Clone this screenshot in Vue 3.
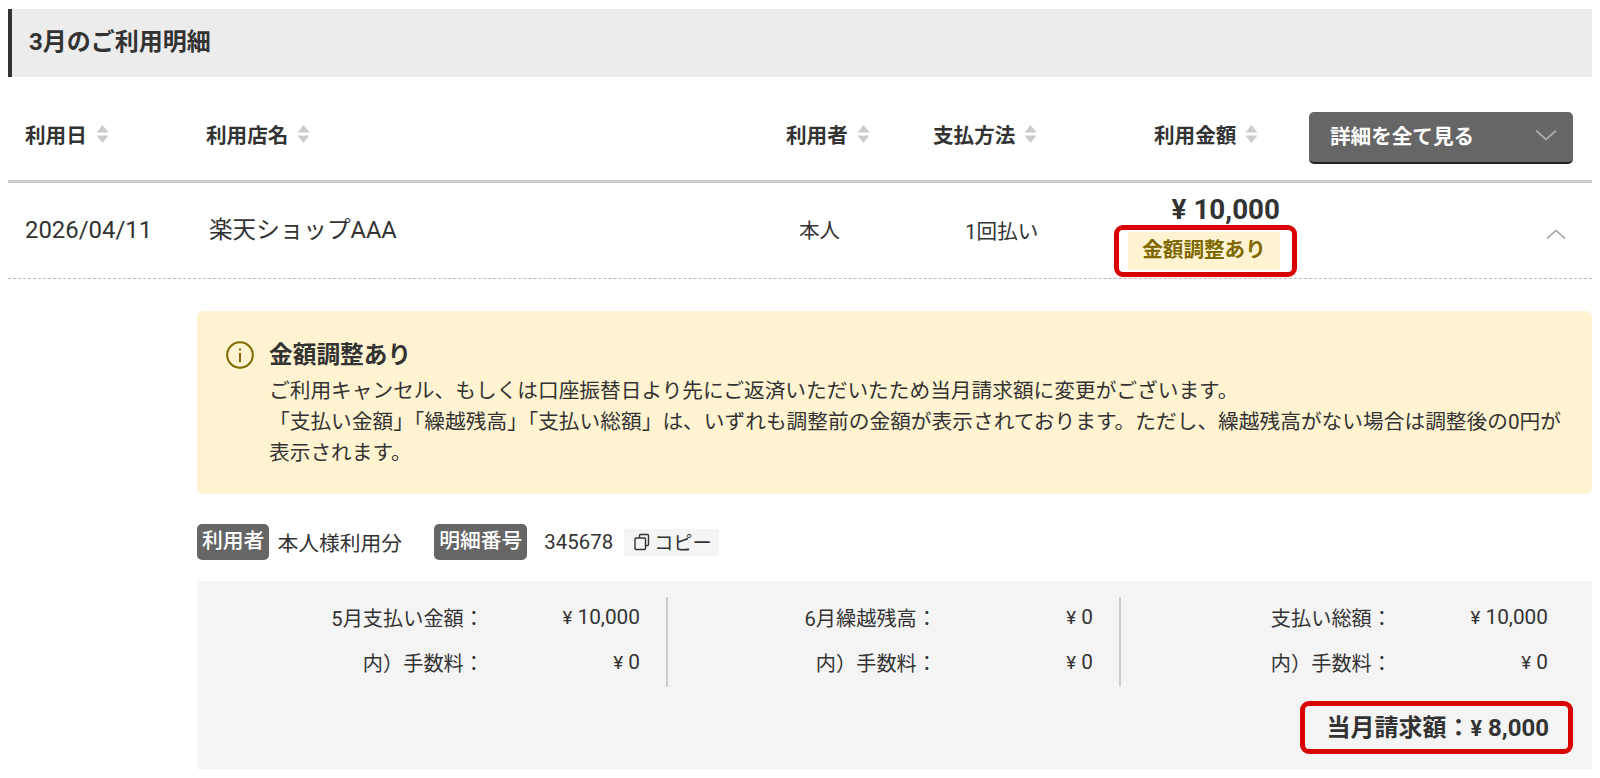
<template>
  <div class="statement">
    <h2 class="title">3月のご利用明細</h2>

    <div class="table-head">
      <div v-for="col in columns" :key="col.label" class="th" :class="col.cls">
        {{ col.label }}
        <svg class="sort" viewBox="0 0 13 20" width="13" height="20">
          <path d="M6.5 1 12.5 8.5H.5Z" />
          <path d="M.5 11.5h12L6.5 19Z" />
        </svg>
      </div>
      <button class="all-btn" type="button">
        <span>詳細を全て見る</span>
        <svg viewBox="0 0 22 12" width="22" height="12">
          <path d="M1 1.5 11 10.5 21 1.5" />
        </svg>
      </button>
    </div>

    <div class="table-row">
      <div class="cell-date">2026/04/11</div>
      <div class="cell-shop">楽天ショップAAA</div>
      <div class="cell-user">本人</div>
      <div class="cell-pay">1回払い</div>
      <div class="cell-amount">
        <div class="amount">¥ 10,000</div>
        <div class="mark-box">
          <span class="tag">金額調整あり</span>
        </div>
      </div>
      <div class="cell-toggle">
        <svg viewBox="0 0 22 12" width="20" height="11">
          <path d="M1 10.5 11 1.5 21 10.5" />
        </svg>
      </div>
    </div>

    <div class="detail">
      <div class="notice">
        <svg class="info" viewBox="0 0 28 28" width="28" height="28">
          <circle cx="14" cy="14" r="12.8" />
          <path d="M14 12v9" />
          <path d="M14 7.4v2.2" />
        </svg>
        <div>
          <div class="notice-title">金額調整あり</div>
          <p>ご利用キャンセル、もしくは口座振替日より先にご返済いただいたため当月請求額に変更がございます。</p>
          <p>「支払い金額」「繰越残高」「支払い総額」は、いずれも調整前の金額が表示されております。ただし、繰越残高がない場合は調整後の0円が表示されます。</p>
        </div>
      </div>

      <div class="meta">
        <span class="chip">利用者</span>
        <span class="meta-user">本人様利用分</span>
        <span class="chip chip-no">明細番号</span>
        <span class="meta-no">345678</span>
        <span class="copy">
          <svg viewBox="0 0 18 18" width="18" height="18">
            <path d="M6.5 4.5V2.5a1 1 0 0 1 1-1h7a1 1 0 0 1 1 1v9a1 1 0 0 1-1 1h-2" />
            <rect x="2" y="5" width="10.5" height="11.5" rx="1" />
          </svg>
          コピー
        </span>
      </div>

      <div class="summary">
        <div class="summary-cols">
          <div v-for="col in summary" :key="col.label" class="summary-col">
            <div class="line">
              <span>{{ col.label }}：</span>
              <span class="val"><i>¥</i> {{ col.value }}</span>
            </div>
            <div class="line">
              <span>内）手数料：</span>
              <span class="val"><i>¥</i> 0</span>
            </div>
          </div>
        </div>
        <div class="total-wrap">
          <div class="total">当月請求額：<i>¥</i> 8,000</div>
        </div>
      </div>
    </div>
  </div>
</template>

<script setup>
const columns = [
  { label: '利用日', cls: 'th-date' },
  { label: '利用店名', cls: 'th-shop' },
  { label: '利用者', cls: 'th-user' },
  { label: '支払方法', cls: 'th-pay' },
  { label: '利用金額', cls: 'th-amount' },
]

const summary = [
  { label: '5月支払い金額', value: '10,000' },
  { label: '6月繰越残高', value: '0' },
  { label: '支払い総額', value: '10,000' },
]
</script>

<style>
html, body {
  background: #fff;
}
</style>

<style scoped>
.statement {
  width: 1600px;
  height: 778px;
  overflow: hidden;
  box-sizing: border-box;
  padding: 9px 8px 0;
  font-family: Roboto, "Noto Sans CJK JP", sans-serif;
  color: #333;
}
.title {
  margin: 0;
  height: 68px;
  line-height: 66px;
  padding-left: 17px;
  background: #ececec;
  border-left: 4px solid #333;
  font-size: 24px;
  font-weight: 700;
}
.table-head {
  display: flex;
  align-items: center;
  box-sizing: border-box;
  height: 106px;
  padding-top: 10px;
  border-bottom: 3px solid #ccc;
}
.th {
  display: flex;
  align-items: center;
  gap: 9px;
  box-sizing: border-box;
  font-size: 20.6px;
  font-weight: 700;
}
.sort {
  fill: #ccc;
}
.th-date { width: 180px; padding-left: 17px; }
.th-shop { width: 578px; padding-left: 18px; }
.th-user { width: 147px; padding-left: 20px; }
.th-pay { width: 218px; padding-left: 20px; }
.th-amount { width: 178px; padding-left: 23px; }
.all-btn {
  display: flex;
  align-items: center;
  justify-content: space-between;
  width: 264px;
  height: 52px;
  margin-top: 9px;
  padding: 0 16px 4px 21px;
  background: #666;
  border: 0;
  border-bottom: 2px solid #222;
  border-radius: 5px;
  color: #fff;
  font: 700 20.6px Roboto, "Noto Sans CJK JP", sans-serif;
}
.all-btn svg, .cell-toggle svg {
  fill: none;
  stroke: #aaa;
  stroke-width: 2;
}
.table-row {
  display: flex;
  align-items: center;
  height: 95px;
  border-bottom: 1px dashed #bbb;
}
.cell-date { width: 180px; padding-left: 17px; box-sizing: border-box; font-size: 23.9px; margin-bottom: 2px; }
.cell-shop { width: 578px; padding-left: 21px; box-sizing: border-box; font-size: 23.6px; margin-bottom: 5px; }
.cell-user { width: 147px; padding-left: 33px; box-sizing: border-box; font-size: 20.6px; margin-bottom: 3px; }
.cell-pay { width: 194px; padding-left: 52px; box-sizing: border-box; font-size: 20.6px; margin-bottom: 2px; }
.cell-amount {
  display: flex;
  flex-direction: column;
  align-items: flex-end;
  width: 190px;
  padding-top: 10px;
}
.amount {
  font-size: 27.8px;
  font-weight: 700;
  line-height: 30px;
  padding-right: 17px;
}
.mark-box {
  display: flex;
  box-sizing: border-box;
  height: 52px;
  width: 183px;
  padding: 2px 12px 2px 9px;
  border: 5px solid #d90000;
  border-radius: 9px;
}
.tag {
  flex: 1;
  text-align: center;
  background: #fff3d1;
  color: #806800;
  font-size: 20.6px;
  font-weight: 700;
  line-height: 36px;
  border-radius: 2px;
}
.cell-toggle {
  flex: 1;
  display: flex;
  justify-content: flex-end;
  padding: 8px 26px 0 0;
}
.detail {
  margin-left: 189px;
  padding-top: 32px;
}
.notice {
  display: flex;
  gap: 15px;
  box-sizing: border-box;
  height: 183px;
  padding: 26px 31px 0 29px;
  background: #fff3d1;
  border-radius: 6px;
}
.info {
  flex: none;
  margin-top: 4px;
  fill: none;
  stroke: #806800;
  stroke-width: 2;
}
.notice-title {
  font-size: 23.7px;
  font-weight: 700;
  line-height: 36px;
  margin-bottom: 3px;
}
.notice p {
  margin: 0;
  font-size: 20.7px;
  line-height: 31px;
  text-align: justify;
}
.meta {
  display: flex;
  align-items: center;
  height: 36px;
  margin-top: 30px;
  font-size: 20.8px;
}
.chip {
  background: #666;
  color: #fff;
  border-radius: 5px;
  height: 36px;
  line-height: 35px;
  padding: 0 5px;
  font-size: 20.8px;
  font-weight: 500;
}
.meta-user { margin-left: 8px; }
.chip-no { margin-left: 32px; }
.meta-no { margin-left: 17px; font-size: 20.4px; }
.copy {
  display: flex;
  align-items: center;
  margin-left: 11px;
  height: 27px;
  padding: 0 7px 0 9px;
  background: #f4f4f4;
  border-radius: 3px;
  font-size: 19.2px;
}
.copy svg {
  fill: none;
  stroke: #333;
  stroke-width: 1.4;
  margin-right: 3px;
}
.summary {
  margin-top: 21px;
  height: 188px;
  box-sizing: border-box;
  padding-top: 16px;
  background: #f4f4f4;
  font-size: 20.2px;
}
.summary-cols {
  display: grid;
  grid-template-columns: 471px 453px 1fr;
}
.summary-col {
  height: 90px;
  padding-right: 26px;
  border-right: 2px solid #ccc;
  box-sizing: border-box;
}
.summary-col:last-child {
  border-right: 0;
  padding-right: 44px;
}
.line {
  display: flex;
  justify-content: flex-end;
  align-items: center;
  box-sizing: border-box;
  height: 45px;
  padding-bottom: 5px;
}
.val {
  width: 156px;
  text-align: right;
  font-size: 20.8px;
}
.val i, .total i {
  font-style: normal;
  font-size: 0.9em;
}
.total-wrap {
  display: flex;
  justify-content: flex-end;
  padding: 14px 19px 0 0;
}
.total {
  box-sizing: border-box;
  width: 273px;
  height: 53px;
  line-height: 45px;
  padding-right: 19px;
  text-align: right;
  border: 5px solid #d90000;
  border-radius: 9px;
  font-size: 24px;
  font-weight: 700;
  white-space: nowrap;
}
</style>
